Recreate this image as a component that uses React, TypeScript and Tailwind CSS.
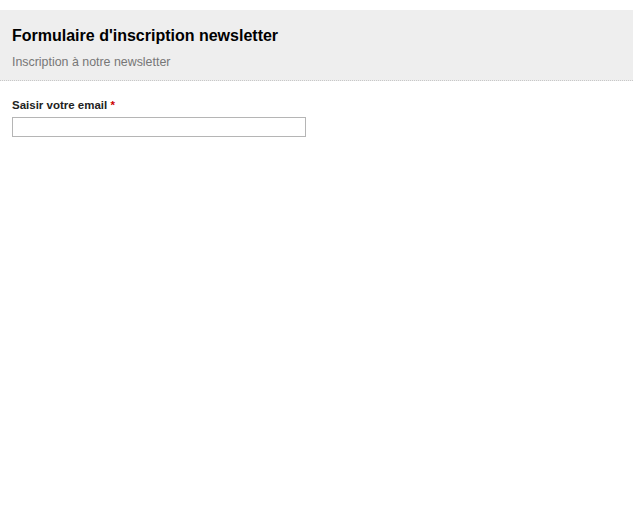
export default function App() {
  return (
    <div className="min-h-[506px] bg-white pt-[10px]" style={{ fontFamily: '"Liberation Sans", Arial, sans-serif' }}>
      <div className="bg-[#eeeeee] border-b border-dotted border-[#c8c8c8] px-[12px] pt-[16px] pb-[11px]">
        <h1 className="text-[16px] leading-[19px] font-bold text-black">Formulaire d'inscription newsletter</h1>
        <p className="mt-[10px] text-[12.4px] leading-[14px] text-[#777777]">Inscription à notre newsletter</p>
      </div>
      <div className="px-[12px] pt-[18px]">
        <label className="block text-[11.5px] leading-[13px] font-bold text-[#222222]">
          Saisir votre email <span className="text-[#cc0000]">*</span>
        </label>
        <input type="text" className="mt-[5px] block w-[294px] h-[20px] border border-[#b5b5b5] bg-white outline-none" />
      </div>
    </div>
  );
}
